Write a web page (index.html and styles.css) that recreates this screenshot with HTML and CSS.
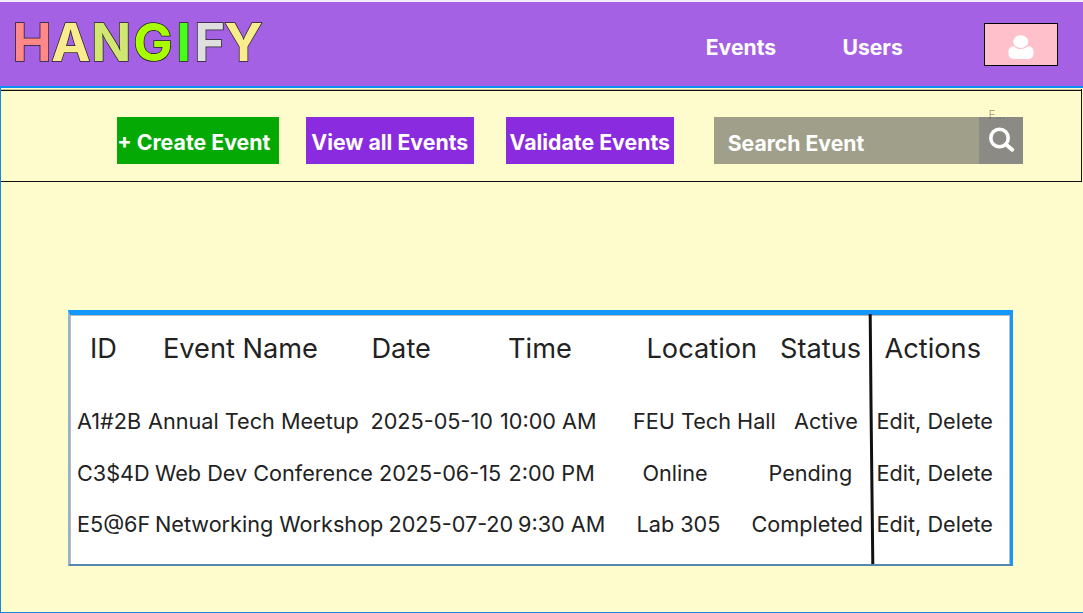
FILE: index.html
```html
<!DOCTYPE html>
<html lang="en">
<head>
<meta charset="utf-8">
<title>Hangify</title>
<link rel="stylesheet" href="styles.css">
</head>
<body>
<header class="header">
  <h1 class="logo"><span class="l-h">H</span><span class="l-a">A</span><span class="l-n">N</span><span class="l-g">G</span><span class="l-i">I</span><span class="l-f">F</span><span class="l-y">Y</span></h1>
  <nav class="nav"><a class="nav-events">Events</a><a class="nav-users">Users</a></nav>
  <button class="profile" aria-label="Profile">
    <svg width="26" height="25" viewBox="0 0 26 25"><rect x=".5" y="11.2" width="25" height="12.8" rx="5" fill="#fff"/><ellipse cx="12.8" cy="6.6" rx="8.2" ry="6.9" fill="#fff" stroke="#ffc0cb" stroke-width="1.2"/></svg>
  </button>
</header>
<main class="page">
  <section class="toolbar">
    <button class="btn create">+ Create Event</button>
    <button class="btn view">View all Events</button>
    <button class="btn validate">Validate Events</button>
    <div class="search">
      <span class="search-label">Search Event</span>
      <span class="search-btn"><svg width="28" height="28" viewBox="0 0 28 28" fill="none" stroke="#fff"><circle cx="11.5" cy="11" r="8.7" stroke-width="3.6"/><path d="M18 17.5l6.2 5.2" stroke-width="4" stroke-linecap="round"/></svg></span>
      <span class="field-tag">F...</span>
    </div>
  </section>
  <section class="events">
    <div class="row head"><span>ID</span><span>Event Name</span><span>Date</span><span>Time</span><span>Location</span><span>Status</span><span>Actions</span></div>
    <div class="row r1"><span>A1#2B</span><span>Annual Tech Meetup</span><span>2025-05-10</span><span>10:00 AM</span><span>FEU Tech Hall</span><span>Active</span><span>Edit, Delete</span></div>
    <div class="row r2"><span>C3$4D</span><span>Web Dev Conference</span><span>2025-06-15</span><span>2:00 PM</span><span>Online</span><span>Pending</span><span>Edit, Delete</span></div>
    <div class="row r3"><span>E5@6F</span><span>Networking Workshop</span><span>2025-07-20</span><span>9:30 AM</span><span>Lab 305</span><span>Completed</span><span>Edit, Delete</span></div>
    <svg class="divider" width="8" height="250" viewBox="0 0 8 250"><path d="M2.2 0L3 90L4.8 250" fill="none" stroke="#111" stroke-width="3"/></svg>
  </section>
</main>
</body>
</html>
```
FILE: styles.css
```css
* { box-sizing: border-box; }
body {
  margin: 0;
  width: 1083px;
  height: 613px;
  overflow: hidden;
  display: flex;
  flex-direction: column;
  background: #fefbcd;
  font-family: Inter, "Liberation Sans", sans-serif;
  font-optical-sizing: none;
}
button { border: 0; padding: 0; font: inherit; color: inherit; }
.header {
  height: 88px;
  flex: none;
  display: flex;
  align-items: flex-start;
  border-top: 2px solid #f3edfa;
  border-bottom: 2px solid #0d8ef5;
  background: #a561e4;
}
.logo {
  display: flex;
  width: 691px;
  margin: 0;
  padding: 8px 0 0 12.5px;
  font-size: 52.5px;
  line-height: 64px;
  font-weight: 700;
  -webkit-text-stroke: 1.5px #222;
  paint-order: stroke fill;
}
.logo span { flex: none; }
.l-h { width: 38.7px; color: #ff8888; }
.l-a { width: 40px; color: #f8ec8d; }
.l-n { width: 42px; color: #d2e672; }
.l-g { width: 43px; color: #a8ff00; }
.l-i { width: 18px; color: #48ff17; }
.l-f { width: 30px; color: #dfdfdf; }
.l-y { width: 40px; color: #f8ec8d; }
.nav {
  display: flex;
  width: 293px;
  padding: 33px 0 0 14.7px;
  color: #fff;
  font-size: 21.2px;
  line-height: 25px;
  font-weight: 650;
}
.nav-events { width: 136.7px; }
.profile {
  width: 74px;
  height: 43px;
  margin-top: 21px;
  padding-top: 11px;
  display: flex;
  justify-content: center;
  background: #ffc0cb;
  border: 1px solid #000;
}
.page {
  flex: 1;
  padding-top: 1px;
  border-left: 1px solid #1788e0;
  border-bottom: 1px solid #1788e0;
}
.toolbar {
  width: 1081px;
  height: 93px;
  display: flex;
  padding: 28px 0 0 116px;
  border: 1px solid #111;
  border-top: 0;
  border-left: 0;
  box-shadow: inset 0 1px #c5c297, inset 0 2px #111;
}
.btn {
  height: 47px;
  padding-top: 3px;
  color: #fff;
  font-size: 21.3px;
  font-weight: 650;
  white-space: nowrap;
}
.create { width: 161.5px; margin-right: 27.5px; padding-right: 8px; background: #04a904; }
.view { width: 167.5px; margin-right: 32.5px; background: #8a2be0; }
.validate { width: 167.5px; margin-right: 40.5px; background: #8a2be0; }
.search {
  position: relative;
  display: flex;
  width: 309px;
  height: 47px;
  color: #fff;
  background: #a09f8a;
  font-size: 21.2px;
  font-weight: 650;
}
.search-label { width: 265px; padding: 14px 0 0 13.7px; line-height: 25px; }
.search-btn { width: 44px; padding: 10px 0 0 9px; background: #8b8a84; }
.field-tag {
  position: absolute;
  left: 274.5px;
  top: -10px;
  color: rgba(80, 80, 70, .6);
  font-size: 12px;
  line-height: 15px;
  font-weight: 300;
}
.events {
  position: relative;
  width: 945.5px;
  height: 256px;
  margin: 128px 0 0 66.5px;
  border-style: solid;
  border-color: #1297fc #1297fc #5488b0 #91b6cb;
  border-width: 5px 3px 2px 2px;
  background: #fff;
  box-shadow: inset 1px 0 #bbb, inset -1px 0 #bbb, inset 0 1px #bbb;
  color: #222;
}
.row { display: grid; white-space: nowrap; font-size: 21.65px; line-height: 51.5px; padding-left: 7.5px; }
.head {
  grid-template-columns: 73px 208.5px 136.5px 138.5px 133.5px 104.5px 1fr;
  padding-left: 20.5px;
  height: 81px;
  font-size: 27.2px;
  line-height: 67px;
}
.r1 { grid-template-columns: 71px 222.5px 129.5px 133px 161px 82.5px 1fr; }
.r2 { grid-template-columns: 78px 224px 129.5px 134px 126px 108px 1fr; }
.r3 { grid-template-columns: 78px 233.5px 129.5px 118.5px 115px 125px 1fr; }
.divider { position: absolute; left: 798.5px; top: -1px; }
```
